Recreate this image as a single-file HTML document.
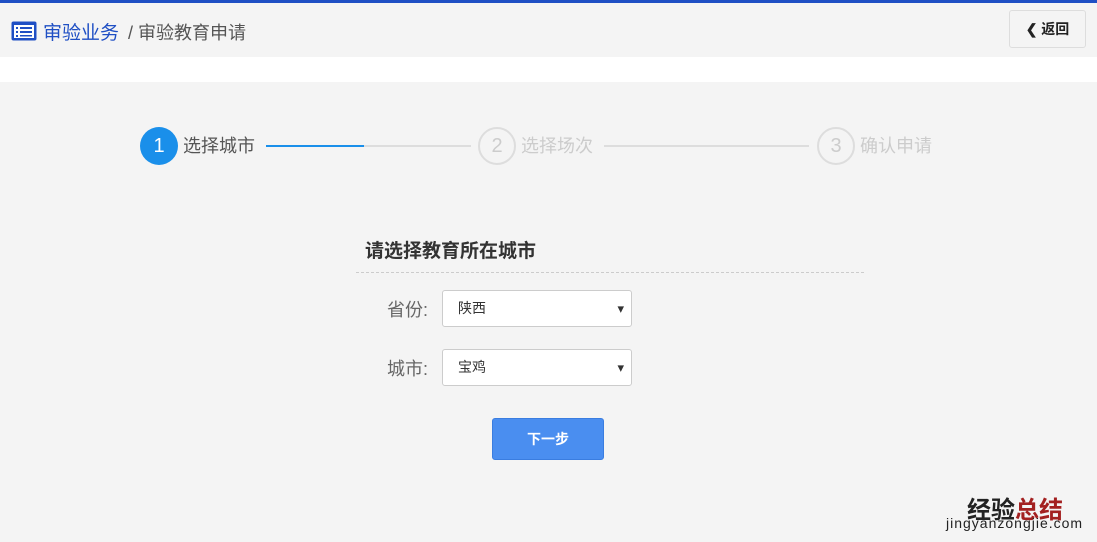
<!DOCTYPE html>
<html><head><meta charset="utf-8"><style>
*{box-sizing:border-box;margin:0;padding:0}
body{width:1097px;height:542px;background:#f4f4f4;font-family:"Liberation Sans","Noto Sans CJK SC",sans-serif;position:relative;overflow:hidden}
.top{position:absolute;left:0;top:0;width:1097px;height:3px;background:#1f4fc4}
.hdr{position:absolute;left:0;top:3px;width:1097px;height:54px;background:#f4f4f4}
.band{position:absolute;left:0;top:57px;width:1097px;height:25px;background:#fff}
.t{position:absolute;top:18px;font-size:19px}
.back{position:absolute;left:1009px;top:10px;width:77px;height:38px;border:1px solid #ddd;border-radius:3px;background:#f4f4f4;font-size:14px;font-weight:bold;line-height:36px;text-align:center;color:#222}
.circ{position:absolute;width:38px;height:38px;border-radius:50%;font-size:20px;text-align:center;line-height:34px}
.lbl{position:absolute;top:132px;font-size:18px}
.line{position:absolute;top:145px;height:2px;background:#ddd}
.sel{position:absolute;left:442px;width:190px;height:37px;border:1px solid #ccc;border-radius:3px;background:#fff;font-size:14px;line-height:35px;padding-left:15px;color:#333}
.sel:after{content:"▾";position:absolute;right:7px;top:0;font-size:13px;color:#333}
.fl{position:absolute;left:387px;font-size:18px;color:#666}
</style></head><body>
<div class="top"></div><div class="hdr"></div><div class="band"></div>
<svg style="position:absolute;left:11px;top:21px" width="26" height="20"><rect x="0.5" y="0.5" width="25" height="19" rx="2" fill="#1f4fc4"/><rect x="3" y="4" width="20" height="13" fill="#fff"/><g fill="#1f4fc4"><rect x="5" y="6" width="2" height="2"/><rect x="9" y="6" width="12" height="2"/><rect x="5" y="10" width="2" height="2"/><rect x="9" y="10" width="12" height="2"/><rect x="5" y="14" width="2" height="2"/><rect x="9" y="14" width="12" height="1.5"/></g></svg>
<div class="t" style="left:43px;color:#1f4fc4">审验业务</div>
<div class="t" style="left:128px;color:#555;font-size:18px;top:19px">/ 审验教育申请</div>
<div class="back">&#10094; 返回</div>
<div class="circ" style="left:140px;top:127px;background:#1a8fea;color:#fff;line-height:38px">1</div>
<div class="lbl" style="left:183px;color:#555">选择城市</div>
<div class="line" style="left:266px;width:205px"></div>
<div class="line" style="left:266px;width:98px;background:#1a8fea"></div>
<div class="circ" style="left:478px;top:127px;border:2px solid #ddd;color:#ccc">2</div>
<div class="lbl" style="left:521px;color:#ccc">选择场次</div>
<div class="line" style="left:604px;width:205px"></div>
<div class="circ" style="left:817px;top:127px;border:2px solid #ddd;color:#ccc">3</div>
<div class="lbl" style="left:860px;color:#ccc">确认申请</div>
<div style="position:absolute;left:365px;top:236px;font-size:19px;font-weight:bold;color:#333">请选择教育所在城市</div>
<div style="position:absolute;left:356px;top:272px;width:508px;border-top:1px dashed #ccc"></div>
<div class="fl" style="top:296px">省份:</div>
<div class="sel" style="top:290px">陕西</div>
<div class="fl" style="top:355px">城市:</div>
<div class="sel" style="top:349px">宝鸡</div>
<div style="position:absolute;left:492px;top:418px;width:112px;height:42px;background:#4a8ef0;border:1px solid #3a7de0;border-radius:3px;color:#fff;font-size:14px;font-weight:bold;text-align:center;line-height:40px">下一步</div>
<div style="position:absolute;left:967px;top:490px;font-size:24px;font-weight:bold;color:#222">经验<span style="color:#a32020">总结</span></div>
<div style="position:absolute;left:946px;top:515px;font-size:14px;color:#222;letter-spacing:1px">jingyanzongjie.com</div>
</body></html>
